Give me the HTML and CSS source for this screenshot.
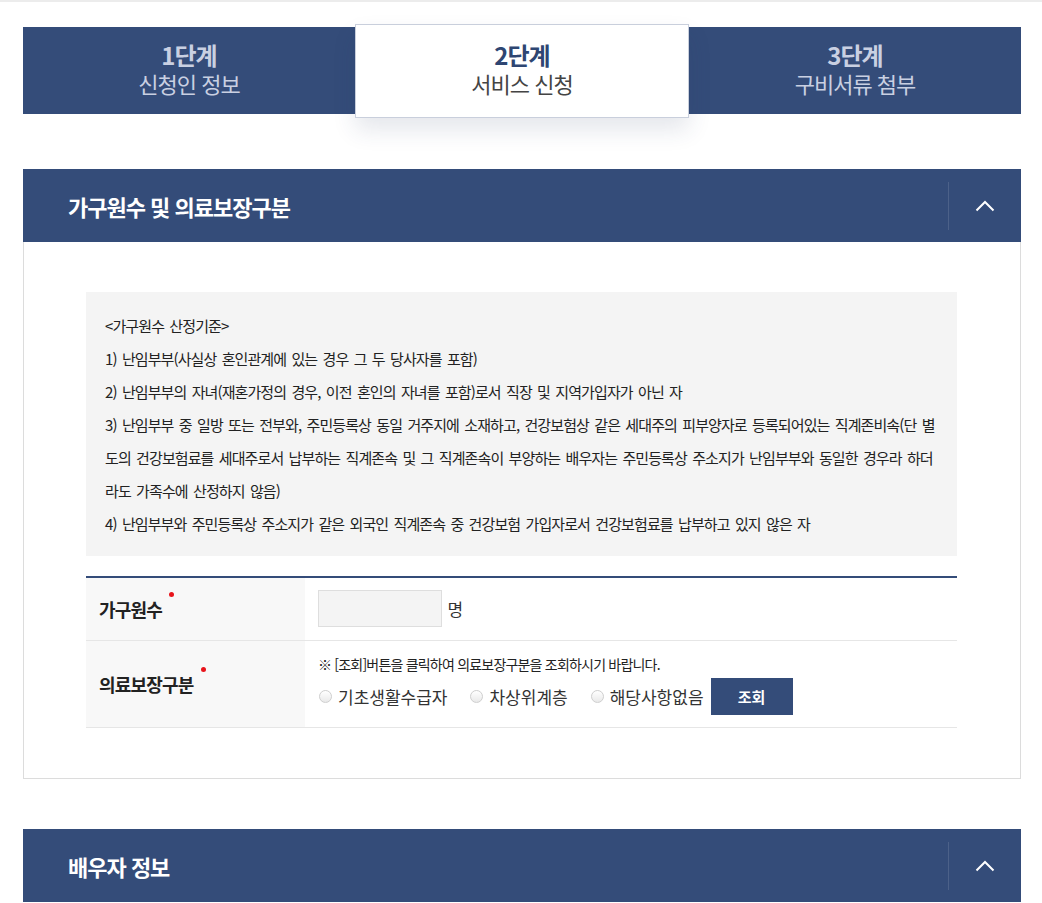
FILE: index.html
```html
<!DOCTYPE html>
<html lang="ko">
<head>
    <meta charset="UTF-8">
    <meta name="viewport" content="width=device-width, initial-scale=1.0">
    <title>서비스 신청</title>
    <link rel="stylesheet" href="styles.css">
</head>
<body>
    <div class="top-line"></div>
    <div class="wrap">
        <div class="steps">
            <div class="step">
                <strong>1단계</strong>
                <span>신청인 정보</span>
            </div>
            <div class="step active">
                <strong>2단계</strong>
                <span>서비스 신청</span>
            </div>
            <div class="step">
                <strong>3단계</strong>
                <span>구비서류 첨부</span>
            </div>
        </div>

        <div class="section">
            <div class="section-head">
                <h2>가구원수 및 의료보장구분</h2>
                <button class="toggle" type="button">
                    <svg width="20" height="12" viewBox="0 0 20 12"><path d="M1.5 10.5 L10 2 L18.5 10.5" fill="none" stroke="#fff" stroke-width="2"/></svg>
                </button>
            </div>
            <div class="section-body">
                <div class="info">
                    <p>&lt;가구원수 산정기준&gt;</p>
                    <p>1) 난임부부(사실상 혼인관계에 있는 경우 그 두 당사자를 포함)</p>
                    <p>2) 난임부부의 자녀(재혼가정의 경우, 이전 혼인의 자녀를 포함)로서 직장 및 지역가입자가 아닌 자</p>
                    <p>3) 난임부부 중 일방 또는 전부와, 주민등록상 동일 거주지에 소재하고, 건강보험상 같은 세대주의 피부양자로 등록되어있는 직계존비속(단 별<br>도의 건강보험료를 세대주로서 납부하는 직계존속 및 그 직계존속이 부양하는 배우자는 주민등록상 주소지가 난임부부와 동일한 경우라 하더<br>라도 가족수에 산정하지 않음)</p>
                    <p>4) 난임부부와 주민등록상 주소지가 같은 외국인 직계존속 중 건강보험 가입자로서 건강보험료를 납부하고 있지 않은 자</p>
                </div>

                <table class="form-table">
                    <tr class="row-count">
                        <th><span class="req">가구원수</span></th>
                        <td>
                            <input type="text" class="input-count"> <span class="unit">명</span>
                        </td>
                    </tr>
                    <tr class="row-medical">
                        <th><span class="req">의료보장구분</span></th>
                        <td>
                            <p class="note">※ [조회]버튼을 클릭하여 의료보장구분을 조회하시기 바랍니다.</p>
                            <div class="radios">
                                <label><input type="radio" name="med"> 기초생활수급자</label>
                                <label><input type="radio" name="med"> 차상위계층</label>
                                <label><input type="radio" name="med"> 해당사항없음</label>
                                <button class="btn-search" type="button">조회</button>
                            </div>
                        </td>
                    </tr>
                </table>
            </div>
        </div>

        <div class="section">
            <div class="section-head">
                <h2>배우자 정보</h2>
                <button class="toggle" type="button">
                    <svg width="20" height="12" viewBox="0 0 20 12"><path d="M1.5 10.5 L10 2 L18.5 10.5" fill="none" stroke="#fff" stroke-width="2"/></svg>
                </button>
            </div>
        </div>
    </div>
</body>
</html>
```

FILE: styles.css
```css
body {
    margin: 0;
    font-family: "Noto Sans CJK KR", "Noto Sans", sans-serif;
    color: #333;
    background: #fff;
}
.top-line {
    height: 2px;
    background: #ececec;
}
.wrap {
    margin: 0 21px 0 23px;
}

/* steps */
.steps {
    display: flex;
    margin-top: 25px;
    height: 87px;
    background: #344c79;
}
.step {
    flex: 1;
    display: flex;
    flex-direction: column;
    align-items: center;
    justify-content: center;
    padding-bottom: 4px;
    color: #c9d0e2;
    letter-spacing: -1px;
}
.step strong {
    font-size: 24px;
    font-weight: bold;
    line-height: 29px;
}
.step span {
    font-size: 22px;
    line-height: 29px;
}
.step.active {
    background: #fff;
    color: #444;
    margin: -3px 0 -4px;
    border: 1px solid #c9cfdc;
    box-shadow: 0 12px 22px rgba(40, 60, 100, 0.12);
    position: relative;
    z-index: 1;
}
.step.active strong {
    color: #2e4672;
}

/* section */
.section {
    margin-top: 55px;
}
.section + .section {
    margin-top: 50px;
}
.section-head {
    display: flex;
    align-items: center;
    height: 73px;
    background: #344c79;
}
.section-head h2 {
    flex: 1;
    margin: 0;
    padding-left: 45px;
    font-size: 22px;
    font-weight: bold;
    color: #fff;
    letter-spacing: -1px;
}
.toggle {
    width: 73px;
    height: 48px;
    border: none;
    border-left: 1px solid rgba(255, 255, 255, 0.12);
    background: none;
    display: flex;
    align-items: center;
    justify-content: center;
    padding: 0;
    cursor: pointer;
}
.section-body {
    border: 1px solid #dcdcdc;
    border-top: none;
    padding: 50px 63px 50px 62px;
}

.info {
    background: #f4f4f4;
    padding: 17px 19px 16px;
}
.info p {
    margin: 0;
    font-size: 15px;
    line-height: 33px;
    letter-spacing: -0.9px;
    word-spacing: 2px;
    color: #222;
    white-space: nowrap;
}

/* table */
.form-table {
    width: 100%;
    margin-top: 20px;
    border-collapse: collapse;
    border-top: 2px solid #344c79;
}
.form-table th {
    width: 205px;
    background: #f8f8f8;
    text-align: left;
    padding-left: 13px;
    font-size: 18px;
    font-weight: bold;
    color: #222;
    letter-spacing: -0.8px;
    border-bottom: 1px solid #e6e6e6;
}
.form-table td {
    border-bottom: 1px solid #e6e6e6;
    padding: 12px 13px 13px;
}
.row-count th, .row-count td {
    height: 37px;
}
.row-medical td {
    padding: 12px 13px 12px;
}
.req {
    position: relative;
    display: inline-block;
    line-height: 24px;
}
.req::after {
    content: "";
    position: absolute;
    right: -12px;
    top: -5px;
    width: 5px;
    height: 5px;
    border-radius: 50%;
    background: #e8141b;
}
.input-count {
    width: 122px;
    height: 35px;
    border: 1px solid #dedede;
    background: #f4f4f4;
    padding: 0;
    margin: 0;
    vertical-align: middle;
}
.unit {
    font-size: 17px;
    vertical-align: middle;
    margin-left: 1px;
}
.note {
    margin: 0 0 3px;
    font-size: 14px;
    line-height: 22px;
    letter-spacing: -0.8px;
    color: #222;
}
.radios {
    display: flex;
    align-items: center;
}
.radios label {
    display: flex;
    align-items: center;
    font-size: 17px;
    color: #333;
    margin-right: 22px;
    white-space: nowrap;
}
.radios label:nth-child(3) {
    margin-right: 7px;
}
.radios input {
    appearance: none;
    width: 13px;
    height: 13px;
    margin: 0 6px 0 1px;
    border: 1px solid #cfcfcf;
    border-radius: 50%;
    background: linear-gradient(#fff, #e9e9e9);
}
.btn-search {
    width: 82px;
    height: 37px;
    border: none;
    background: #344c79;
    color: #fff;
    font-family: inherit;
    font-size: 15px;
    font-weight: bold;
    cursor: pointer;
}
```
